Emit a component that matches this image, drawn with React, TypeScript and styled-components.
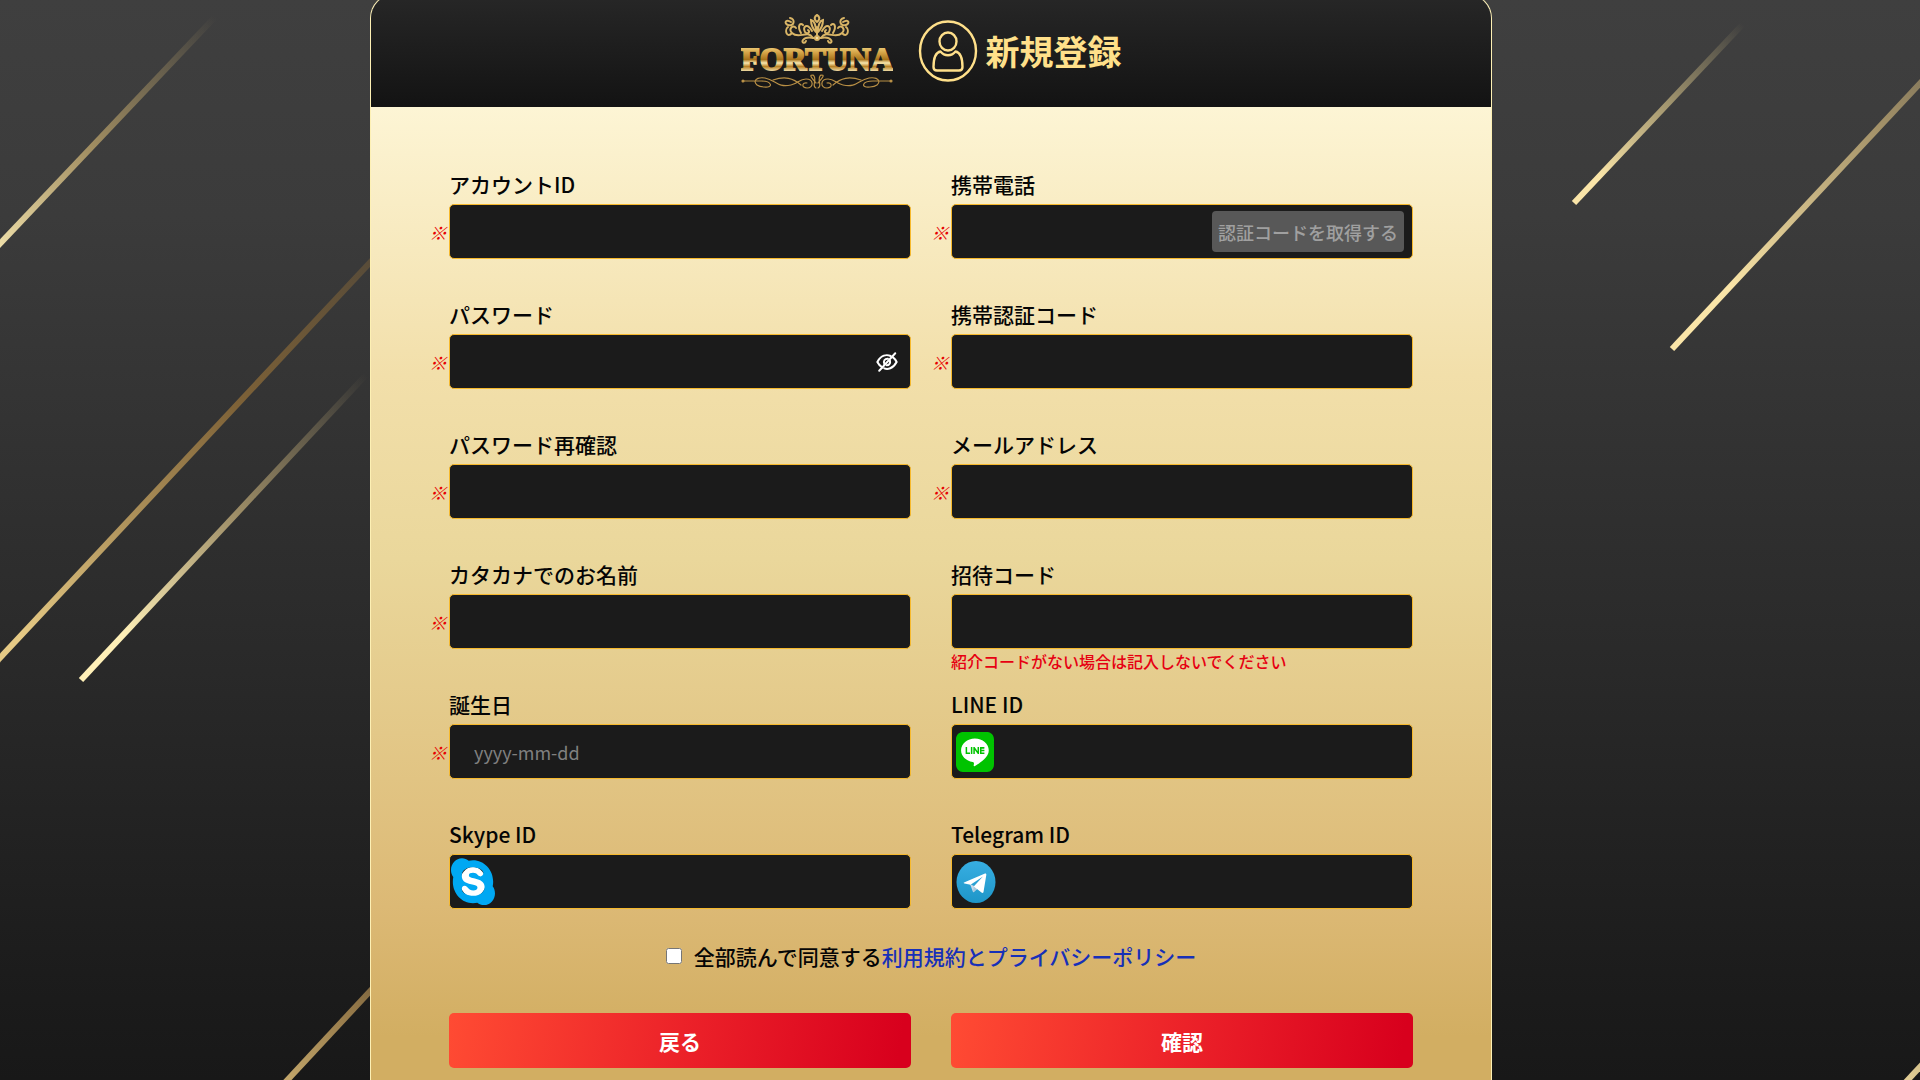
import React, { useState } from 'react';
import styled, { createGlobalStyle } from 'styled-components';
import { FaLine, FaSkype } from 'react-icons/fa';

const GlobalStyle = createGlobalStyle`
  *, *::before, *::after { box-sizing: border-box; }
  body {
    margin: 0;
    background: #181818;
    color: #050505;
    font-family: "Noto Sans CJK JP", "Noto Sans", sans-serif;
    font-size: 21px;
    font-weight: 500;
    line-height: 30px;
  }
  input, button { font: inherit; }
`;

const Page = styled.div`
  position: relative;
  min-height: 100vh;
  padding-right: 58px;
  overflow: hidden;
  background: linear-gradient(180deg, #3f3f3f 0%, #3b3b3b 20%, #2a2a2a 60%, #1c1c1c 90%, #181818 100%);
`;

const Streaks = styled.svg`
  position: absolute;
  inset: 0;
  width: 100%;
  height: 100%;
`;

const Card = styled.main`
  position: relative;
  max-width: 1122px;
  min-height: calc(100vh + 6px);
  margin: -6px auto 0;
  border: 1px solid #fdf0b4;
  border-bottom: 0;
  border-radius: 24px 24px 0 0;
  overflow: hidden;
  background: linear-gradient(180deg, #fdf5d5 10%, #f2dfaa 35%, #ead79b 52%, #dcb975 84%, #d2ae62 96%);
`;

const Header = styled.header`
  display: flex;
  align-items: center;
  justify-content: center;
  height: 112px;
  background: linear-gradient(180deg, #272727, #131313);
`;

const Title = styled.h1`
  display: flex;
  align-items: center;
  gap: 8px;
  margin: 0 0 0 25px;
  color: #ffe08a;
  font-size: 34px;
  font-weight: 700;
  line-height: 48px;
`;

const Form = styled.form`
  padding: 62px 78px 12px 58px;
`;

const Fields = styled.div`
  display: grid;
  grid-template-columns: repeat(2, minmax(0, 1fr));
  gap: 40px 20px;
`;

const FieldGrid = styled.div`
  display: grid;
  grid-template-columns: 20px minmax(0, 1fr);
  align-content: start;
`;

const Label = styled.label`
  grid-column: 2;
  margin-bottom: 5px;
`;

const Required = styled.span`
  align-self: center;
  justify-self: start;
  color: #e60000;
  font-size: 18px;
  font-style: italic;
  font-weight: 700;
  line-height: 24px;
`;

const InputBox = styled.div<{ $inset: number }>`
  grid-column: 2;
  display: flex;
  align-items: center;
  height: 55px;
  padding: 0 8px 0 ${(p) => p.$inset}px;
  border: 1px solid #f7b92c;
  border-radius: 5px;
  background: #1b1b1b;

  > svg { flex: none; }
`;

const TextInput = styled.input`
  flex: 1;
  min-width: 0;
  height: 100%;
  padding: 0 12px 0 20px;
  border: 0;
  outline: 0;
  background: transparent;
  color: #fff;
  font-size: 18px;
  font-weight: 400;

  &::placeholder { color: #808080; opacity: 1; }
`;

const Hint = styled.p`
  grid-column: 2;
  margin: 0 0 -24px;
  color: #e60012;
  font-size: 16px;
  line-height: 24px;
`;

const CodeButton = styled.button`
  height: 41px;
  padding: 0 6px;
  border: 0;
  border-radius: 4px;
  background: #585858;
  color: #a0a0a0;
  font-size: 18px;
  white-space: nowrap;
`;

const EyeButton = styled.button`
  display: flex;
  padding: 0 4px;
  border: 0;
  background: none;
`;

const Terms = styled.div`
  display: flex;
  justify-content: center;
  align-items: center;
  gap: 12px;
  margin: 32px 0 42px;
  padding-left: 20px;

  input { width: 16px; height: 16px; margin: 0; }
  a { color: #1730b8; text-decoration: none; }
`;

const Actions = styled.div`
  display: grid;
  grid-template-columns: 1fr 1fr;
  gap: 40px;
  padding-left: 20px;
`;

const ActionButton = styled.button`
  height: 55px;
  border: 0;
  border-radius: 5px;
  background: linear-gradient(100deg, #ff4b33 0%, #ec2229 50%, #d8001d 97%);
  color: #fff;
  font-weight: 700;
`;

type Streak = { from: [number, number]; to: [number, number]; start: string; mid: string };

const streaks: Streak[] = [
  { from: [-60, 307], to: [215, 17], start: '#fff0b8', mid: '#b39c68' },
  { from: [-60, 722], to: [480, 145], start: '#e6ca85', mid: '#8b6a38' },
  { from: [81, 680], to: [366, 375], start: '#fff0b8', mid: '#b09d70' },
  { from: [200, 1174], to: [480, 873], start: '#e6ca85', mid: '#a88750' },
  { from: [1574, 203], to: [1743, 24], start: '#fae5a8', mid: '#b5a678' },
  { from: [1672, 349], to: [2050, -56], start: '#fae5a8', mid: '#b5a070' },
  { from: [1840, 1153], to: [2100, 873], start: '#fae5a8', mid: '#c0aa74' },
];

function Background() {
  return (
    <Streaks viewBox="0 0 1920 1080" preserveAspectRatio="xMidYMid slice" aria-hidden="true">
      {streaks.map((s, i) => (
        <g key={i}>
          <linearGradient id={`streak${i}`} gradientUnits="userSpaceOnUse" x1={s.from[0]} y1={s.from[1]} x2={s.to[0]} y2={s.to[1]}>
            <stop offset="0" stopColor={s.start} />
            <stop offset="0.15" stopColor={s.start} />
            <stop offset="0.55" stopColor={s.mid} stopOpacity="0.85" />
            <stop offset="1" stopColor={s.mid} stopOpacity="0" />
          </linearGradient>
          <line x1={s.from[0]} y1={s.from[1]} x2={s.to[0]} y2={s.to[1]} stroke={`url(#streak${i})`} strokeWidth="6" />
        </g>
      ))}
    </Streaks>
  );
}

function Logo() {
  const crown = (
    <>
      <path d="M72 29 C66 20 58 31 51 24 C47 20 52 15 55 19 M51 24 C46 30 43 21 47 18" />
      <path d="M71 22 C66 13 61 18 64 23 C66 26 70 23 67 21 M60 24 C56 17 59 13 62 16" />
      <path d="M50 13 C44 9 43 15 47 16 C53 18 55 10 49 9" />
      <path d="M73 29 C68 28 64 28 62 31 C60 34 64 35 65 32" />
      <path d="M75 23 C71 19 70 14 70 11 C74 12 75 17 75 23" />
    </>
  );
  const scroll = (
    <>
      <path d="M2 72 H20 C31 72 33 79 23 78 C10 77 12 67 24 69 C35 71 36 79 50 76 C57 75 58 70 65 70 C73 70 73 79 66 79 C60 79 61 73 66 74" />
      <path d="M32 71 C44 67 52 69 60 76 M75 74 C70 68 68 66 72 66 C77 70 70 77 75 79" />
    </>
  );
  return (
    <svg width="152" height="84" viewBox="0 0 152 84" role="img" aria-label="FORTUNA">
      <defs>
        <linearGradient id="gold" x1="0" y1="0" x2="0" y2="1">
          <stop offset="0.1" stopColor="#f2d786" />
          <stop offset="0.3" stopColor="#d6a548" />
          <stop offset="0.5" stopColor="#a9741c" />
          <stop offset="0.6" stopColor="#f8e8b0" />
          <stop offset="0.7" stopColor="#b98328" />
          <stop offset="0.85" stopColor="#f7e9b8" />
        </linearGradient>
      </defs>
      <g fill="none" stroke="#d9b566" strokeWidth="2" strokeLinecap="round">
        <g>{crown}</g>
        <g transform="translate(152 0) scale(-1 1)">{crown}</g>
        <path d="M76 30 V18 M76 13 C72 10 74 7 76 6 C78 7 80 10 76 13" />
        <circle cx="76" cy="29" r="2" fill="#f7e9b8" />
      </g>
      <text x="76" y="61" textAnchor="middle" fontFamily='"Liberation Serif", serif' fontWeight="700" fontSize="31" fill="url(#gold)" stroke="url(#gold)" strokeWidth="1.8">
        FORTUNA
      </text>
      <g fill="none" stroke="#b88f45" strokeWidth="1.2" strokeLinecap="round">
        <g>{scroll}</g>
        <g transform="translate(152 0) scale(-1 1)">{scroll}</g>
        <circle cx="2" cy="72" r="1" fill="#e0c070" />
        <circle cx="150" cy="72" r="1" fill="#e0c070" />
      </g>
    </svg>
  );
}

function UserIcon() {
  return (
    <svg width="60" height="62" viewBox="0 0 60 62" fill="none" stroke="#ffe08a" strokeWidth="2.4" aria-hidden="true">
      <ellipse cx="30" cy="31" rx="28" ry="29.5" />
      <ellipse cx="30" cy="21.5" rx="8.5" ry="9" />
      <path d="M22.5 31.5 C17.5 32.5 15.5 38 15.5 47 C15.5 49.5 16.5 50.5 19 50.5 H41 C43.5 50.5 44.5 49.5 44.5 47 C44.5 38 42.5 32.5 37.5 31.5 C33.5 36.5 26.5 36.5 22.5 31.5 Z" strokeLinejoin="round" />
    </svg>
  );
}

function EyeOffIcon() {
  return (
    <svg width="22" height="22" viewBox="0 0 24 22" fill="none" stroke="#fff" strokeWidth="2.2" strokeLinecap="round" aria-hidden="true">
      <path d="M7 17 C4.5 15.5 2.5 13 1.5 11 C5.5 3.5 11.5 2.5 16 4.5" />
      <path d="M18.5 6 C20.5 7.5 21.7 9.3 22.5 11 C18.5 18.5 12.5 19.5 9 18" />
      <path d="M9.2 13.5 C7.5 10 9.5 7.3 13 7.5" />
      <path d="M15.2 9.5 C16 12.5 14 14.8 11.5 14.5" />
      <path d="M3.5 20.5 L21 1.5" />
    </svg>
  );
}

function LineIcon() {
  return (
    <svg width="38" height="40" viewBox="0 0 38 40" aria-hidden="true">
      <rect x="4" y="4" width="30" height="32" fill="#fff" />
      <g transform="scale(0.944 0.994) translate(-2.9 -2.9)">
        <FaLine size={46} color="#00c300" />
      </g>
    </svg>
  );
}

function SkypeIcon() {
  return (
    <svg width="44" height="48" viewBox="0 0 44 48" aria-hidden="true">
      <ellipse cx="22" cy="24" rx="13" ry="15" fill="#fff" />
      <g transform="scale(0.967 1.03) translate(-3.25 -3)">
        <FaSkype size={52} color="#00a8f3" />
      </g>
    </svg>
  );
}

function TelegramIcon() {
  return (
    <svg width="40" height="42" viewBox="0 0 40 42" aria-hidden="true">
      <defs>
        <linearGradient id="sky" x1="0" y1="0" x2="0" y2="1">
          <stop offset="0" stopColor="#37aee2" />
          <stop offset="1" stopColor="#1e96c8" />
        </linearGradient>
      </defs>
      <ellipse cx="20" cy="21" rx="19.5" ry="21" fill="url(#sky)" />
      <path d="M14 23 L17 31 C17.5 31.5 18 31 18.5 30.5 L22 27 Z" fill="#c8daea" />
      <path d="M17 31 L17.8 25.5 L30 13 L22 27.5 Z" fill="#a9c9dd" />
      <path d="M8 21.5 L29 12.5 C30 12.2 30.5 13 30.3 14 L27.5 31 C27.2 32.2 26.5 32.3 25.5 31.6 L17.8 25.5 L27 15.5 L14.5 23.8 L8.5 22.5 C7.5 22.2 7.5 21.8 8 21.5 Z" fill="#fff" />
    </svg>
  );
}

type FieldProps = {
  id: string;
  label: string;
  required?: boolean;
  type?: string;
  placeholder?: string;
  hint?: string;
  icon?: React.ReactNode;
  iconInset?: number;
  action?: React.ReactNode;
};

function Field({ id, label, required, type = 'text', placeholder, hint, icon, iconInset = 4, action }: FieldProps) {
  return (
    <FieldGrid>
      <Label htmlFor={id}>{label}</Label>
      {required && <Required>※</Required>}
      <InputBox $inset={iconInset}>
        {icon}
        <TextInput id={id} type={type} placeholder={placeholder} required={required} />
        {action}
      </InputBox>
      {hint && <Hint>{hint}</Hint>}
    </FieldGrid>
  );
}

export default function App() {
  const [visible, setVisible] = useState(false);
  return (
    <Page>
      <GlobalStyle />
      <Background />
      <Card>
        <Header>
          <Logo />
          <Title>
            <UserIcon />
            新規登録
          </Title>
        </Header>
        <Form onSubmit={(e) => e.preventDefault()}>
          <Fields>
            <Field id="account" label="アカウントID" required />
            <Field id="phone" label="携帯電話" required type="tel" action={<CodeButton type="button" disabled>認証コードを取得する</CodeButton>} />
            <Field
              id="password"
              label="パスワード"
              required
              type={visible ? 'text' : 'password'}
              action={
                <EyeButton type="button" aria-label="パスワードを表示" onClick={() => setVisible(!visible)}>
                  <EyeOffIcon />
                </EyeButton>
              }
            />
            <Field id="phone-code" label="携帯認証コード" required />
            <Field id="password-confirm" label="パスワード再確認" required type="password" />
            <Field id="email" label="メールアドレス" required type="email" />
            <Field id="kana" label="カタカナでのお名前" required />
            <Field id="invite" label="招待コード" hint="紹介コードがない場合は記入しないでください" />
            <Field id="birthday" label="誕生日" required placeholder="yyyy-mm-dd" />
            <Field id="line" label="LINE ID" icon={<LineIcon />} />
            <Field id="skype" label="Skype ID" icon={<SkypeIcon />} iconInset={1} />
            <Field id="telegram" label="Telegram ID" icon={<TelegramIcon />} />
          </Fields>
          <Terms>
            <input id="agree" type="checkbox" />
            <span>
              <label htmlFor="agree">全部読んで同意する</label>
              <a href="#terms">利用規約とプライバシーポリシー</a>
            </span>
          </Terms>
          <Actions>
            <ActionButton type="button">戻る</ActionButton>
            <ActionButton type="submit">確認</ActionButton>
          </Actions>
        </Form>
      </Card>
    </Page>
  );
}
